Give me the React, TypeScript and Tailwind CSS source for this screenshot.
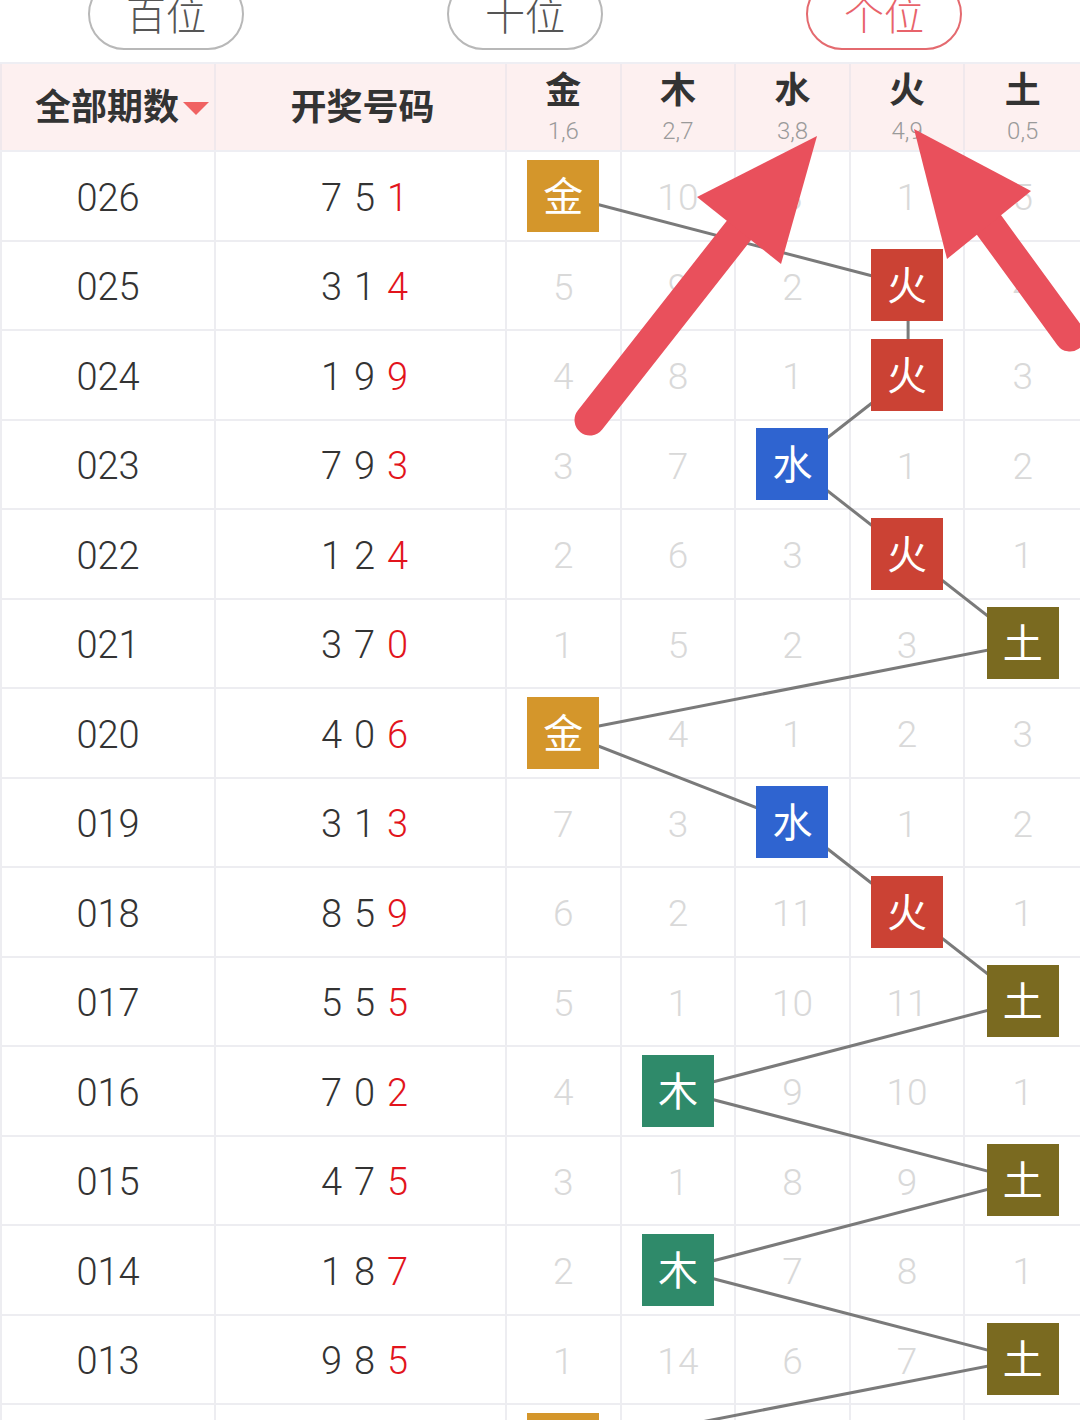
import React from "react";

type Row = { p: string; n: [number, number, number]; box: number; vals: (number | null)[] };

const rows: Row[] = [
  { p: "026", n: [7, 5, 1], box: 0, vals: [null, 10, 3, 1, 5] },
  { p: "025", n: [3, 1, 4], box: 3, vals: [5, 9, 2, null, 4] },
  { p: "024", n: [1, 9, 9], box: 3, vals: [4, 8, 1, null, 3] },
  { p: "023", n: [7, 9, 3], box: 2, vals: [3, 7, null, 1, 2] },
  { p: "022", n: [1, 2, 4], box: 3, vals: [2, 6, 3, null, 1] },
  { p: "021", n: [3, 7, 0], box: 4, vals: [1, 5, 2, 3, null] },
  { p: "020", n: [4, 0, 6], box: 0, vals: [null, 4, 1, 2, 3] },
  { p: "019", n: [3, 1, 3], box: 2, vals: [7, 3, null, 1, 2] },
  { p: "018", n: [8, 5, 9], box: 3, vals: [6, 2, 11, null, 1] },
  { p: "017", n: [5, 5, 5], box: 4, vals: [5, 1, 10, 11, null] },
  { p: "016", n: [7, 0, 2], box: 1, vals: [4, null, 9, 10, 1] },
  { p: "015", n: [4, 7, 5], box: 4, vals: [3, 1, 8, 9, null] },
  { p: "014", n: [1, 8, 7], box: 1, vals: [2, null, 7, 8, 1] },
  { p: "013", n: [9, 8, 5], box: 4, vals: [1, 14, 6, 7, null] },
  { p: "012", n: [3, 2, 6], box: 0, vals: [null, 13, 5, 6, 2] },
];

const elems = [
  { name: "金", sub: "1,6", bg: "bg-[#d4962b]" },
  { name: "木", sub: "2,7", bg: "bg-[#2f8a6a]" },
  { name: "水", sub: "3,8", bg: "bg-[#2f64d0]" },
  { name: "火", sub: "4,9", bg: "bg-[#cb4234]" },
  { name: "土", sub: "0,5", bg: "bg-[#7a6a20]" },
];

const ROW_H = 89.5;
const COL_W = (1080 - 507) / 5;

function Pill({ label, active }: { label: string; active?: boolean }) {
  return (
    <div
      className={
        active
          ? "mt-[-22px] h-[72px] w-[156px] rounded-full border-2 border-[#e46a6f] flex items-center justify-center pt-[2px] text-[40px] font-light text-[#e8636b]"
          : "mt-[-22px] h-[72px] w-[156px] rounded-full border-2 border-[#b8b8b8] flex items-center justify-center pt-[2px] text-[40px] font-light text-[#555555]"
      }
    >
      {label}
    </div>
  );
}

export default function App() {
  const pts = rows.map((r, i) => ({
    x: 507 + COL_W * (r.box + 0.5),
    y: i * ROW_H + (ROW_H - 2) / 2,
  }));
  return (
    <div className="relative w-[1080px] h-[1420px] overflow-hidden bg-white font-['Noto_Sans','Noto_Sans_CJK_SC',sans-serif]">
      {/* tabs */}
      <div className="h-[62px] flex items-start pl-[88px] gap-[203px] overflow-hidden">
        <Pill label="百位" />
        <Pill label="十位" />
        <Pill label="个位" active />
      </div>

      {/* header */}
      <div className="grid grid-cols-[216px_291px_repeat(5,1fr)] h-[90px] bg-[#fdf0f0] border-y-2 border-[#eeeef3]">
        <div className="flex items-center justify-center border-r-2 border-l-2 border-[#f0e8ec] pl-[28px]">
          <span className="text-[36px] font-bold text-[#333333] leading-none">全部期数</span>
          <svg width="26" height="14" viewBox="0 0 26 14" className="ml-[4px] mt-[4px]">
            <polygon points="0,0 26,0 13,13" fill="#f06262" />
          </svg>
        </div>
        <div className="flex items-center justify-center border-r-2 border-[#f0e8ec] pl-[4px]">
          <span className="text-[36px] font-bold text-[#333333] leading-none">开奖号码</span>
        </div>
        {elems.map((e, i) => (
          <div
            key={e.name}
            className={
              i < 4
                ? "flex flex-col items-center justify-center border-r-2 border-[#f0e8ec]"
                : "flex flex-col items-center justify-center"
            }
          >
            <span className="text-[36px] font-bold text-[#333333] leading-none">{e.name}</span>
            <span className="text-[24px] font-light text-[#9a9a9a] leading-none mt-[11px] font-['Roboto','Noto_Sans',sans-serif]">
              {e.sub}
            </span>
          </div>
        ))}
      </div>

      {/* body */}
      <div className="relative">
        {rows.map((r) => (
          <div
            key={r.p}
            className="grid grid-cols-[216px_291px_repeat(5,1fr)] h-[89.5px] border-b-2 border-[#ededf1]"
          >
            <div className="flex items-center justify-center border-r-2 border-l-2 border-[#ededf1] pt-[5px] text-[38px] font-light text-[#333333] font-['Roboto','Noto_Sans',sans-serif]">
              {r.p}
            </div>
            <div className="flex items-center justify-center border-r-2 border-[#ededf1] pt-[5px] text-[38px] font-light text-[#333333] pl-[8px] font-['Roboto','Noto_Sans',sans-serif]">
              <span>{r.n[0]}</span>
              <span className="ml-[12px]">{r.n[1]}</span>
              <span className="ml-[12px] text-[#e2141c]">{r.n[2]}</span>
            </div>
            {elems.map((e, ci) => (
              <div
                key={e.name}
                className={
                  ci < 4
                    ? "flex items-center justify-center border-r-2 border-[#ededf1]"
                    : "flex items-center justify-center"
                }
              >
                {r.box === ci ? (
                  <div
                    className={`relative z-10 w-[72px] h-[72px] ${e.bg} flex items-center justify-center text-[40px] text-white leading-none`}
                  >
                    {e.name}
                  </div>
                ) : (
                  <span className="pt-[4px] text-[37px] font-light text-[#d9d9d9] font-['Roboto','Noto_Sans',sans-serif]">
                    {r.vals[ci]}
                  </span>
                )}
              </div>
            ))}
          </div>
        ))}
        <svg
          className="absolute left-0 top-0 pointer-events-none"
          width={1080}
          height={rows.length * ROW_H}
        >
          {pts.slice(0, -1).map((p, i) => (
            <line
              key={i}
              x1={p.x}
              y1={p.y}
              x2={pts[i + 1].x}
              y2={pts[i + 1].y}
              stroke="#7a7a7a"
              strokeWidth={3}
            />
          ))}
        </svg>
      </div>

      {/* annotation arrows */}
      <svg className="absolute left-0 top-0 z-20 pointer-events-none" width={1080} height={1420}>
        <line x1={590} y1={420} x2={740} y2={229} stroke="#e9505c" strokeWidth={31} strokeLinecap="round" />
        <polygon points="817,136 697,197 781,264" fill="#e9505c" />
        <line x1={1070} y1={336} x2={989} y2={225} stroke="#e9505c" strokeWidth={31} strokeLinecap="round" />
        <polygon points="914,129 947,259 1031,191" fill="#e9505c" />
      </svg>
    </div>
  );
}
